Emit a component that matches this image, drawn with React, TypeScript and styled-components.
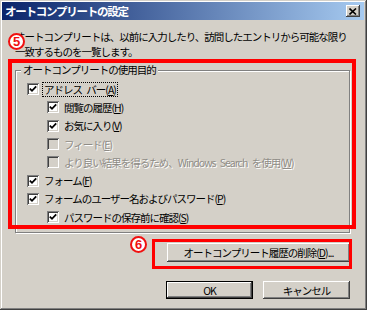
import React from 'react';
import styled, { createGlobalStyle } from 'styled-components';

const Global = createGlobalStyle`
  html, body { margin: 0; padding: 0; background: #d4d0c8; }
  body {
    width: 367px; height: 310px; overflow: hidden;
    font-family: "Noto Sans CJK JP", "DejaVu Sans", sans-serif;
  }
`;

const Window = styled.div`
  position: relative;
  box-sizing: border-box;
  width: 367px;
  height: 310px;
  padding: 2px 3px 3px 2px;
  background: #d4d0c8;
  box-shadow: inset -1px -1px #404040, inset 1px 1px #d4d0c8,
    inset -2px -2px #808080, inset 2px 2px #fff;
  display: flex;
  flex-direction: column;
`;

const TitleBar = styled.div`
  height: 18px;
  display: flex;
  align-items: center;
  justify-content: space-between;
  padding: 0 4px 0 3px;
  background: linear-gradient(to right, #0a246a, #a6caf0);
`;

const Title = styled.span`
  color: #fff;
  font-weight: bold;
  font-size: 11.5px;
  letter-spacing: -1.25px;
`;

const CloseBtn = styled.div`
  box-sizing: border-box;
  width: 14px;
  height: 12px;
  background: #d4d0c8;
  box-shadow: inset -1px -1px #404040, inset 1px 1px #fff,
    inset -2px -2px #808080;
  display: flex;
  align-items: center;
  justify-content: center;
`;

const Body = styled.div`
  flex: 1;
  display: flex;
  flex-direction: column;
  padding: 0 14px 0 13px;
  font-size: 10.5px;
  letter-spacing: -1px;
  word-spacing: 3px;
  color: #000;
`;

const Description = styled.div`
  margin-top: 10px;
  line-height: 14.5px;
  white-space: nowrap;
`;

const Line = styled.div``;

const Group = styled.div`
  position: relative;
  box-sizing: border-box;
  margin-top: 11px;
  height: 163px;
  border: 1px solid #808080;
  box-shadow: inset 1px 1px #fff, 1px 1px #fff;
  padding: 9px 0 0 11px;
  display: flex;
  flex-direction: column;
`;

const Legend = styled.span`
  position: absolute;
  left: 5px;
  top: -8px;
  padding: 0 2px;
  background: #d4d0c8;
  line-height: 14px;
`;

const Row = styled.div<{ $indent?: boolean }>`
  height: 18.3px;
  display: flex;
  align-items: center;
  padding-left: ${(p) => (p.$indent ? '20px' : '0')};
`;

const Box = styled.span<{ $disabled?: boolean }>`
  box-sizing: border-box;
  width: 12px;
  height: 12px;
  flex: none;
  background: ${(p) => (p.$disabled ? '#d4d0c8' : '#fff')};
  box-shadow: inset 1px 1px #808080, inset -1px -1px #fff,
    inset 2px 2px #404040, inset -2px -2px #d4d0c8;
  display: flex;
  align-items: center;
  justify-content: center;
`;

const Label = styled.span<{ $disabled?: boolean; $focus?: boolean }>`
  margin-left: 4px;
  padding: 0 1px;
  line-height: 13px;
  white-space: nowrap;
  color: ${(p) => (p.$disabled ? '#8f8c86' : '#000')};
  text-shadow: ${(p) => (p.$disabled ? '1px 1px 0 #fff' : 'none')};
  outline: ${(p) => (p.$focus ? '1px dotted #000' : 'none')};
`;

const ButtonRow = styled.div<{ $gap?: number; $top: number }>`
  display: flex;
  justify-content: flex-end;
  gap: ${(p) => p.$gap ?? 0}px;
  margin-top: ${(p) => p.$top}px;
`;

const Button = styled.div<{ $w: number; $h: number; $default?: boolean }>`
  box-sizing: border-box;
  width: ${(p) => p.$w}px;
  height: ${(p) => p.$h}px;
  background: #d4d0c8;
  border: ${(p) => (p.$default ? '1px solid #000' : 'none')};
  box-shadow: inset -1px -1px #404040, inset 1px 1px #fff,
    inset -2px -2px #808080, inset 2px 2px #d4d0c8;
  display: flex;
  align-items: center;
  justify-content: center;
  white-space: nowrap;
`;

const RedBox = styled.div<{ $w: number }>`
  position: absolute;
  box-sizing: border-box;
  border: ${(p) => p.$w}px solid #ff0000;
  pointer-events: none;
`;

const Badge = styled.span`
  position: absolute;
  box-sizing: border-box;
  width: 17px;
  height: 17px;
  border: 2px solid #f01010;
  border-radius: 50%;
  background: #fff;
  color: #f01010;
  font-family: "Liberation Sans", sans-serif;
  font-weight: bold;
  font-size: 13px;
  line-height: 13px;
  text-align: center;
  letter-spacing: 0;
`;

const Check = () => (
  <svg width="8" height="8" viewBox="0 0 8 8">
    <path d="M0.8 3.6 L3 5.8 L7.2 1.4" fill="none" stroke="#000" strokeWidth="1.8" />
  </svg>
);

type Item = { label: React.ReactNode; checked: boolean; indent?: boolean; disabled?: boolean; focus?: boolean };

const items: Item[] = [
  { label: <>アドレス バー(<u>A</u>)</>, checked: true, focus: true },
  { label: <>閲覧の履歴(<u>H</u>)</>, checked: true, indent: true },
  { label: <>お気に入り(<u>V</u>)</>, checked: true, indent: true },
  { label: <>フィード(<u>E</u>)</>, checked: false, indent: true, disabled: true },
  { label: <>より良い結果を得るため、Windows Search を使用(<u>W</u>)</>, checked: false, indent: true, disabled: true },
  { label: <>フォーム(<u>F</u>)</>, checked: true },
  { label: <>フォームのユーザー名およびパスワード(<u>P</u>)</>, checked: true },
  { label: <>パスワードの保存前に確認(<u>S</u>)</>, checked: true, indent: true },
];

export default function App() {
  return (
    <>
      <Global />
      <Window>
        <TitleBar>
          <Title>オートコンプリートの設定</Title>
          <CloseBtn>
            <svg width="8" height="7" viewBox="0 0 8 7">
              <path d="M0.5 0.5 L7 6.5 M7 0.5 L0.5 6.5" stroke="#000" strokeWidth="1.6" />
            </svg>
          </CloseBtn>
        </TitleBar>
        <Body>
          <Description>
            <Line>オートコンプリートは、以前に入力したり、訪問したエントリから可能な限り</Line>
            <Line>一致するものを一覧します。</Line>
          </Description>
          <Group>
            <Legend>オートコンプリートの使用目的</Legend>
            {items.map((it, i) => (
              <Row key={i} $indent={it.indent}>
                <Box $disabled={it.disabled}>{it.checked && <Check />}</Box>
                <Label $disabled={it.disabled} $focus={it.focus}>{it.label}</Label>
              </Row>
            ))}
          </Group>
          <ButtonRow $top={10}>
            <Button $w={183} $h={19}>オートコンプリート履歴の削除(<u>D</u>)...</Button>
          </ButtonRow>
          <ButtonRow $top={19} $gap={10}>
            <Button $w={87} $h={18} $default>OK</Button>
            <Button $w={87} $h={18}>キャンセル</Button>
          </ButtonRow>
        </Body>
        <RedBox $w={4} style={{ left: 8, top: 59, width: 348, height: 170 }} />
        <RedBox $w={3} style={{ left: 152, top: 239, width: 200, height: 30 }} />
        <Badge style={{ left: 8, top: 33 }}>5</Badge>
        <Badge style={{ left: 130, top: 236 }}>6</Badge>
      </Window>
    </>
  );
}
